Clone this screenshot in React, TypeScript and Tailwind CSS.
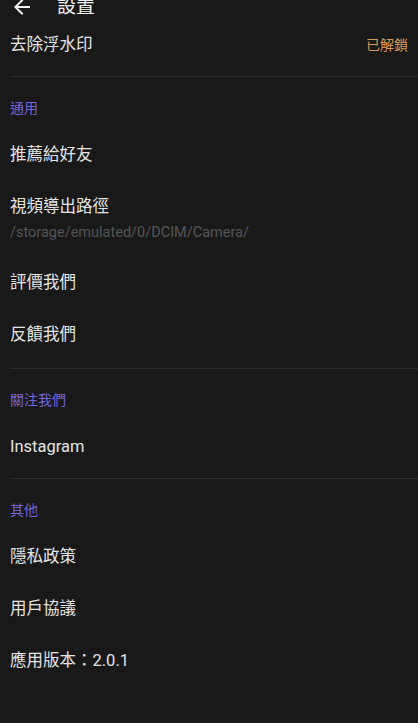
import React from "react";

const font = { fontFamily: 'Roboto, "Noto Sans CJK TC", sans-serif' };

function Row({ label, right }: { label: string; right?: string }) {
  return (
    <div className="flex h-[52px] items-center justify-between px-[10px]">
      <span className="text-[16.5px] text-[#e4e4e4]">{label}</span>
      {right && <span className="text-[14px] text-[#d49c57]">{right}</span>}
    </div>
  );
}

function Section({ title }: { title: string }) {
  return (
    <div className="flex h-[52px] items-center px-[10px] pt-[10px]">
      <span className="text-[14px] text-[#7465d8]">{title}</span>
    </div>
  );
}

function Divider() {
  return <div className="ml-[10px] h-px bg-[#2b2b2b]" />;
}

export default function App() {
  return (
    <div className="h-[723px] w-[418px] overflow-hidden bg-[#191919]" style={font}>
      {/* header, partly scrolled off */}
      <div className="-mt-[7px] flex h-[28px] items-center gap-[23px] px-[10px]">
        <svg width="24" height="24" viewBox="0 0 24 24" fill="#f2f2f2">
          <path d="M20 11H7.83l5.59-5.59L12 4l-8 8 8 8 1.41-1.41L7.83 13H20v-2z" />
        </svg>
        <span className="text-[19px] text-[#f2f2f2]">設置</span>
      </div>

      <div className="-mt-px flex h-[50px] items-center justify-between px-[10px]">
        <span className="text-[16.5px] text-[#e4e4e4]">去除浮水印</span>
        <span className="text-[14px] text-[#d49c57]">已解鎖</span>
      </div>
      <div className="mt-[6px]">
        <Divider />
      </div>

      <Section title="通用" />
      <Row label="推薦給好友" />
      <div className="flex h-[76px] flex-col px-[10px] pt-[14px]">
        <span className="text-[16.5px] leading-[24px] text-[#e4e4e4]">視頻導出路徑</span>
        <span className="mt-[5px] text-[14.5px] leading-[18px] text-[#555555]">
          /storage/emulated/0/DCIM/Camera/
        </span>
      </div>
      <Row label="評價我們" />
      <Row label="反饋我們" />
      <div className="mt-[7px]">
        <Divider />
      </div>

      <Section title="關注我們" />
      <Row label="Instagram" />
      <div className="mt-[5px]">
        <Divider />
      </div>

      <Section title="其他" />
      <Row label="隱私政策" />
      <Row label="用戶協議" />
      <Row label="應用版本：2.0.1" />
    </div>
  );
}
